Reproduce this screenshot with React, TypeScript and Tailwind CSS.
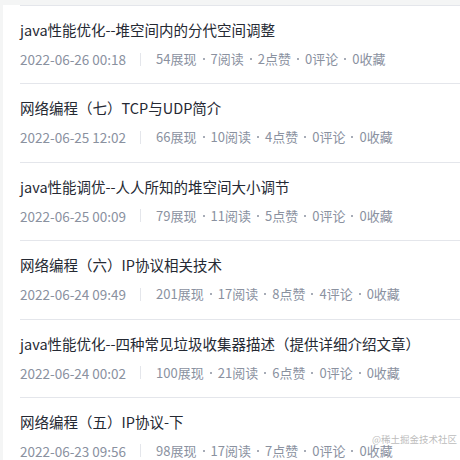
const posts = [
  { title: "java性能优化--堆空间内的分代空间调整", date: "2022-06-26 00:18", view: 54, read: 7, like: 2 },
  { title: "网络编程（七）TCP与UDP简介", date: "2022-06-25 12:02", view: 66, read: 10, like: 4 },
  { title: "java性能调优--人人所知的堆空间大小调节", date: "2022-06-25 00:09", view: 79, read: 11, like: 5 },
  { title: "网络编程（六）IP协议相关技术", date: "2022-06-24 09:49", view: 201, read: 17, like: 8, comment: 4 },
  { title: "java性能优化--四种常见垃圾收集器描述（提供详细介绍文章）", date: "2022-06-24 00:02", view: 100, read: 21, like: 6 },
  { title: "网络编程（五）IP协议-下", date: "2022-06-23 09:56", view: 98, read: 17, like: 7 },
];

const font = { fontFamily: '"Noto Sans CJK SC", "Liberation Sans", sans-serif' };

function Dot() {
  return <span className="mx-[6px] h-[2px] w-[2px] rounded-full bg-[#8a919f]" />;
}

export default function App() {
  return (
    <div className="relative h-[460px] w-[460px] overflow-hidden bg-[#f4f5f5] pl-[3px] pt-[5px]" style={font}>
      <div className="h-full bg-white pl-[17px]">
        {posts.map((p) => (
          <div key={p.date} className="border-t border-[#e4e6eb] pt-[13px] pb-[13.4px]">
            <div className="h-[22px] whitespace-nowrap text-[14.5px] leading-[22px] text-[#252933]">{p.title}</div>
            <div className="mt-[7px] flex h-[22px] items-center whitespace-nowrap text-[13px] leading-[22px] text-[#8a919f]">
              <span className="text-[13.5px]">{p.date}</span>
              <span className="ml-[14px] mr-[15px] h-[13px] w-px bg-[#e4e6eb]" />
              <span>{p.view}展现</span>
              <Dot />
              <span>{p.read}阅读</span>
              <Dot />
              <span>{p.like}点赞</span>
              <Dot />
              <span>{p.comment ?? 0}评论</span>
              <Dot />
              <span>0收藏</span>
            </div>
          </div>
        ))}
      </div>
      <div className="absolute bottom-[15px] right-[3px] text-[9.5px] leading-[12px] text-[#b4b4b4]/90">
        @稀土掘金技术社区
      </div>
    </div>
  );
}
